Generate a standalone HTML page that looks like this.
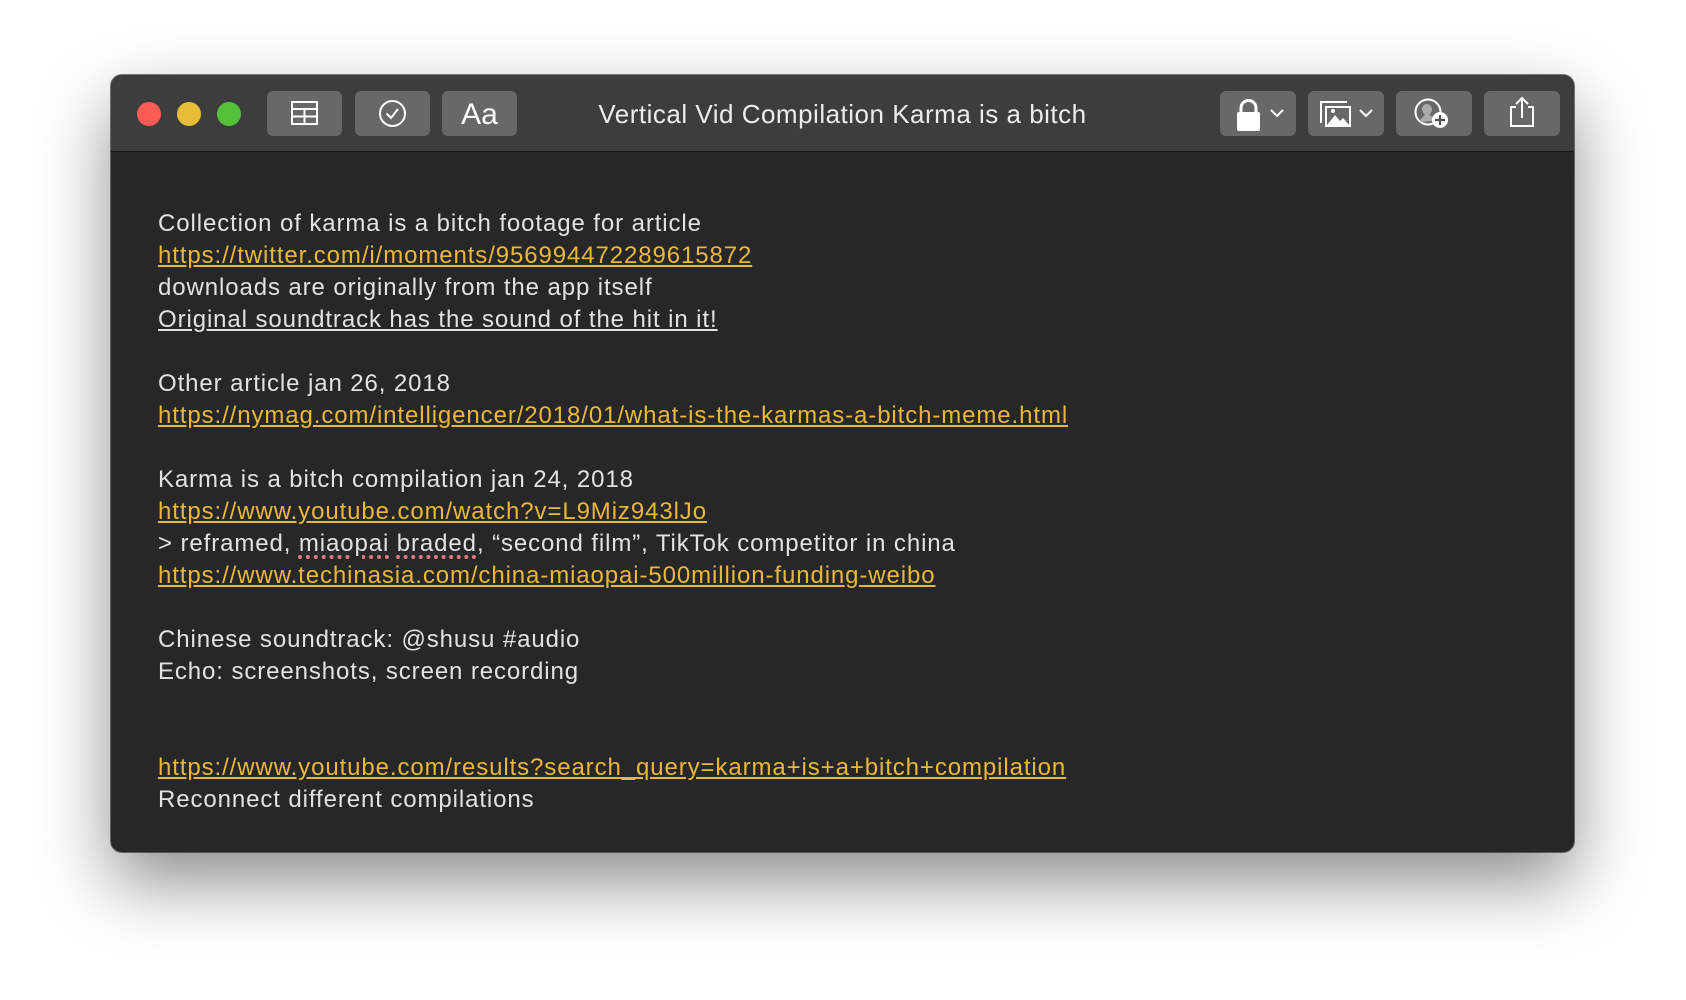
<!DOCTYPE html>
<html><head><meta charset="utf-8"><style>
html,body{margin:0;padding:0;width:1686px;height:1000px;background:#fff;overflow:hidden;font-family:"Liberation Sans",sans-serif}
.win{position:absolute;left:111px;top:75px;width:1463px;height:777px;border-radius:11px;background:#272727;box-shadow:0 30px 70px rgba(0,0,0,.45),0 0 0 1px rgba(0,0,0,.5);overflow:hidden}
.tb{position:absolute;left:0;top:0;width:100%;height:76px;background:#3d3d3d;border-bottom:1px solid #151515}
.dot{position:absolute;top:27px;width:24px;height:24px;border-radius:50%}
.btn{position:absolute;top:16px;height:45px;width:75px;border-radius:6px;background:#686868}
.rb{width:76px}
.title{position:absolute;left:0;right:0;top:24px;text-align:center;color:#ececec;font-size:26px;letter-spacing:0.5px}
.content{position:absolute;left:47px;top:133px;color:#e2e2e2;font-size:24px;letter-spacing:0.9px;line-height:32px}
.l{color:#eab73a;text-decoration:underline}
.u{text-decoration:underline}
.s{text-decoration:underline dotted #e07878;text-decoration-thickness:4px;text-underline-offset:4px}
</style></head><body>
<div class="win">
<div class="tb">
<div class="dot" style="left:26px;background:#fd5b55"></div>
<div class="dot" style="left:66px;background:#e7bd37"></div>
<div class="dot" style="left:106px;background:#55c13b"></div>
<div class="btn" style="left:156px"><svg width="75" height="45"><g fill="none" stroke="#fff" stroke-width="2"><rect x="25" y="11" width="25" height="22"/><line x1="25" y1="18" x2="50" y2="18"/><line x1="25" y1="25.5" x2="50" y2="25.5"/><line x1="37.5" y1="18" x2="37.5" y2="33"/></g></svg></div>
<div class="btn" style="left:244px"><svg width="75" height="45"><g fill="none" stroke="#fff" stroke-width="2"><circle cx="37.5" cy="22.5" r="12.5"/><path d="M31.5 22.5l4.5 4.5 7-9"/></g></svg></div>
<div class="btn" style="left:331px"><svg width="75" height="45"><text x="37.5" y="33" text-anchor="middle" fill="#fff" font-size="30" font-family="Liberation Sans">Aa</text></svg></div>
<div class="title">Vertical Vid Compilation Karma is a bitch</div>
<div class="btn rb" style="left:1109px"><svg width="76" height="45"><rect x="17" y="21" width="23" height="19" rx="2" fill="#fff"/><path d="M21 22v-5a7.5 7.5 0 0 1 15 0v5" fill="none" stroke="#fff" stroke-width="3"/><path d="M51 19l6 6 6-6" fill="none" stroke="#fff" stroke-width="2"/></svg></div>
<div class="btn rb" style="left:1197px"><svg width="76" height="45"><g fill="none" stroke="#fff" stroke-width="2"><path d="M13 32V11h26"/><rect x="18" y="16" width="24" height="19" fill="#686868"/></g><path d="M19 34l8-10 5 6 3-3 6 7z" fill="#fff"/><circle cx="25" cy="20" r="2" fill="#fff"/><path d="M52 19l6 6 6-6" fill="none" stroke="#fff" stroke-width="2"/></svg></div>
<div class="btn rb" style="left:1285px"><svg width="76" height="45"><circle cx="32" cy="21" r="12.5" fill="none" stroke="#fff" stroke-width="2"/><path d="M24 31c1-5 4-6 5-7-2-2-3-4-3-6a5 5 0 0 1 10 0c0 2-1 4-3 6 2 1 5 2 6 6" fill="#aaa"/><circle cx="44" cy="29" r="8" fill="#fff"/><path d="M44 24v10M39 29h10" stroke="#555" stroke-width="2.2"/></svg></div>
<div class="btn rb" style="left:1373px"><svg width="76" height="45"><g fill="none" stroke="#fff" stroke-width="2"><path d="M32 16h-5v19h22V16h-5"/><path d="M38 27V7M32 13l6-6 6 6"/></g></svg></div>
</div>
<div class="content">
Collection of karma is a bitch footage for article<br>
<span class="l">https://twitter.com/i/moments/956994472289615872</span><br>
downloads are originally from the app itself<br>
<span class="u">Original soundtrack has the sound of the hit in it!</span><br>
<br>
Other article jan 26, 2018<br>
<span class="l">https://nymag.com/intelligencer/2018/01/what-is-the-karmas-a-bitch-meme.html</span><br>
<br>
Karma is a bitch compilation jan 24, 2018<br>
<span class="l">https://www.youtube.com/watch?v=L9Miz943lJo</span><br>
&gt; reframed, <span class="s">miaopai</span> <span class="s">braded</span>, “second film”, TikTok competitor in china<br>
<span class="l">https://www.techinasia.com/china-miaopai-500million-funding-weibo</span><br>
<br>
Chinese soundtrack: @shusu #audio<br>
Echo: screenshots, screen recording<br>
<br>
<br>
<span class="l">https://www.youtube.com/results?search_query=karma+is+a+bitch+compilation</span><br>
Reconnect different compilations
</div>
</div>
</body></html>
